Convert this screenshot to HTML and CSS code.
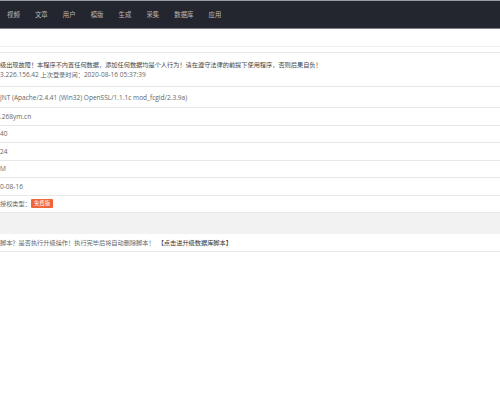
FILE: index.html
```html
<!DOCTYPE html>
<html lang="zh-CN">
<head>
<meta charset="utf-8">
<title>后台首页</title>
<link rel="stylesheet" href="styles.css">
</head>
<body>
<header class="top">
  <nav class="nav">
    <a class="nav-item">视频</a>
    <a class="nav-item">文章</a>
    <a class="nav-item">用户</a>
    <a class="nav-item">模版</a>
    <a class="nav-item">生成</a>
    <a class="nav-item">采集</a>
    <a class="nav-item">数据库</a>
    <a class="nav-item">应用</a>
  </nav>
</header>
<main class="content">
  <div class="card-head"></div>
  <div class="table">
    <div class="row row-tall">
      <div class="lines">
        <span class="warn">级出现故障！本程序不内置任何数据，添加任何数据均是个人行为！请在遵守法律的前提下使用程序，否则后果自负！</span>
        <span><span class="latin">3.226.156.42 </span>上次登录时间：<span class="latin">2020-08-16 05:37:39</span></span>
      </div>
    </div>
    <div class="row row-2"><span class="latin">JNT (Apache/2.4.41 (Win32) OpenSSL/1.1.1c mod_fcgid/2.3.9a)</span></div>
    <div class="row"><span class="latin">.268ym.cn</span></div>
    <div class="row"><span class="latin">40</span></div>
    <div class="row"><span class="latin">24</span></div>
    <div class="row"><span class="latin">M</span></div>
    <div class="row"><span class="latin">0-08-16</span></div>
    <div class="row"><span>授权类型：</span><span class="badge">免费版</span></div>
  </div>
  <div class="table">
    <div class="thead"></div>
    <div class="row row-last"><span>脚本？是否执行升级操作！执行完毕后将自动删除脚本！</span><a class="link">【点击进升级数据库脚本】</a></div>
  </div>
</main>
</body>
</html>
```

FILE: styles.css
```css
html, body {
  margin: 0;
  padding: 0;
  background: #ffffff;
}

body {
  font-family: "Open Sans", "Noto Sans CJK SC", sans-serif;
  font-size: 6.2px;
  color: #666666;
}

.top {
  height: 27px;
  background: #23262e;
  border-top: 1px solid #9b9c9f;
  border-bottom: 1px solid #7d7f84;
}

.nav {
  display: flex;
  height: 100%;
  align-items: center;
  margin-left: -0.5px;
}

.nav-item {
  padding: 0 7.55px;
  color: #b9babd;
  font-size: 6.4px;
  line-height: 27px;
  white-space: nowrap;
}

.content {
  display: flex;
  flex-direction: column;
}

.card-head {
  height: 17px;
  border-bottom: 1px solid #efefef;
  margin-bottom: 5px;
}

.table {
  display: flex;
  flex-direction: column;
  border-top: 1px solid #e8e8e8;
}

.table + .table {
  border-top: none;
}

.row {
  display: flex;
  align-items: center;
  height: 16.5px;
  border-bottom: 1px solid #e8e8e8;
  white-space: nowrap;
  overflow: hidden;
}

.latin {
  font-size: 6.55px;
}

.row-tall {
  height: 33px;
}

.row-2 {
  height: 20px;
}

.lines {
  display: flex;
  flex-direction: column;
  line-height: 10px;
}

.warn {
  color: #444444;
}

.badge {
  display: inline-block;
  padding: 0 3px;
  height: 9px;
  line-height: 9px;
  background: #f0643a;
  color: #ffffff;
  font-size: 5.4px;
  border-radius: 1px;
}

.thead {
  height: 21px;
  background: #f2f2f2;
}

.row-last {
  height: 17px;
}

.link {
  margin-left: 3px;
  color: #333333;
}
```
